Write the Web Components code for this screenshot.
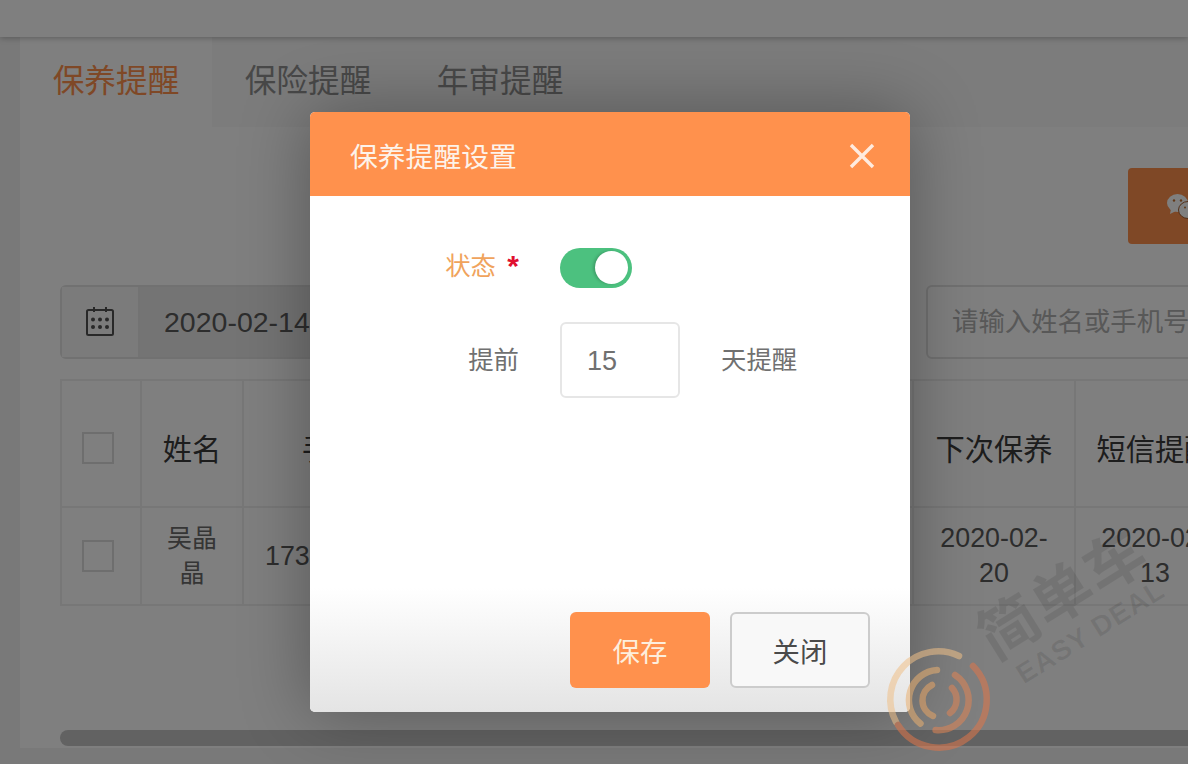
<!DOCTYPE html>
<html lang="zh">
<head>
<meta charset="utf-8">
<title>保养提醒</title>
<style>
  html, body { margin: 0; padding: 0; }
  body {
    width: 1188px;
    height: 764px;
    overflow: hidden;
    font-family: "Liberation Sans", "Noto Sans CJK SC", sans-serif;
  }
</style>
</head>
<body>
<reminder-page></reminder-page>

<script>
const tabsTemplate = document.createElement("template");
tabsTemplate.innerHTML = `
  <style>
    :host{
      display: flex;
      height: 90px;
      background: #f8f8f8;
    }
    div{
      width: 192px;
      box-sizing: border-box;
      padding-top: 22px;
      text-align: center;
      font-size: 31.7px;
      line-height: 44px;
      color: #909090;
    }
    .active{
      background: #fff;
      color: #ff914d;
    }
  </style>
  <div class="active">保养提醒</div>
  <div>保险提醒</div>
  <div>年审提醒</div>
`;

const filterTemplate = document.createElement("template");
filterTemplate.innerHTML = `
  <style>
    :host{
      display: flex;
      justify-content: space-between;
      height: 74px;
      margin-top: 41px;
    }
    .date, .search{
      display: flex;
      box-sizing: border-box;
      border: 2px solid #e2e2e2;
      border-radius: 6px;
      height: 74px;
    }
    .date{ width: 620px; }
    .addon{
      width: 76px;
      flex: none;
      display: flex;
      align-items: center;
      justify-content: center;
      border-right: 2px solid #e6e6e6;
      background: #f6f6f6;
    }
    .value{
      flex: 1;
      padding-left: 24px;
      font-size: 28.5px;
      line-height: 70px;
      color: #5a5a5a;
      background: #e9e9e9;
    }
    .search{
      width: 402px;
      padding-left: 24px;
      font-size: 26.4px;
      line-height: 70px;
      color: #b0b0b0;
      background: #fff;
    }
  </style>
  <div class="date">
    <div class="addon">
      <svg width="28" height="30" viewBox="0 0 28 30" fill="none" stroke="#505050" stroke-width="2">
        <rect x="1" y="3" width="26" height="25" rx="1.5"/>
        <path d="M8 0v5M20 0v5"/>
        <g fill="#505050" stroke="none">
          <circle cx="7" cy="12.5" r="2"/><circle cx="14" cy="12.5" r="2"/><circle cx="21" cy="12.5" r="2"/>
          <circle cx="7" cy="20" r="2"/><circle cx="14" cy="20" r="2"/><circle cx="21" cy="20" r="2"/>
        </g>
      </svg>
    </div>
    <div class="value">2020-02-14</div>
  </div>
  <div class="search">请输入姓名或手机号</div>
`;

const tableTemplate = document.createElement("template");
tableTemplate.innerHTML = `
  <style>
    :host{
      display: block;
      margin-top: 20px;
    }
    table{
      border-collapse: collapse;
      table-layout: fixed;
      width: 1268px;
      color: #5a5a5a;
    }
    th, td{
      border: 2px solid #eeeeee;
      padding: 0;
      text-align: center;
      overflow: hidden;
    }
    th{
      height: 119px;
      padding-top: 6px;
      font-size: 29.3px;
      font-weight: 400;
      color: #3a3a3a;
      white-space: nowrap;
    }
    td{
      height: 96px;
      font-size: 26.8px;
      line-height: 35px;
    }
    .name{ font-size: 25px; color: #6a6a6a; }
    .phone{ padding-left: 2px; }
    i{
      display: block;
      box-sizing: border-box;
      width: 32px;
      height: 32px;
      margin-left: 20px;
      border: 2px solid #dcdcdc;
      background: #fff;
    }
    th i{ margin-top: 2px; }
    .cut{ padding: 0 20px; }
  </style>
  <table>
    <colgroup>
      <col style="width:80px"><col style="width:102px"><col style="width:206px">
      <col style="width:464px"><col style="width:162px"><col style="width:160px"><col>
    </colgroup>
    <tr>
      <th><i></i></th>
      <th>姓名</th>
      <th>手机号</th>
      <th></th>
      <th>下次保养</th>
      <th>短信提醒</th>
      <th></th>
    </tr>
    <tr>
      <td><i></i></td>
      <td class="name cut">吴晶晶</td>
      <td class="phone">17301234567</td>
      <td></td>
      <td class="cut">2020-02-20</td>
      <td class="cut">2020-02-13</td>
      <td></td>
    </tr>
  </table>
`;

const modalTemplate = document.createElement("template");
modalTemplate.innerHTML = `
  <style>
    :host{
      display: flex;
      flex-direction: column;
      width: 600px;
      height: 600px;
      border-radius: 5px;
      overflow: hidden;
      background: #fff;
    }
    header{
      display: flex;
      align-items: center;
      justify-content: space-between;
      height: 84px;
      padding: 0 35px 0 40px;
      background: #ff914d;
      color: #fdf3ea;
      font-size: 27.8px;
    }
    header span{ margin-top: 1px; }
    header svg{ margin-top: 4px; }
    form{
      flex: 1;
      padding-top: 52px;
    }
    .row{
      display: flex;
      align-items: center;
      color: #707070;
      font-size: 25.4px;
    }
    .label{
      width: 209px;
      text-align: right;
      flex: none;
    }
    .status{
      height: 40px;
      margin-bottom: 34px;
    }
    .status .label{
      color: #f0a35c;
      margin-top: -8px;
    }
    .status b{
      display: inline-block;
      width: 12px;
      margin-left: 4px;
      color: #e0102f;
      font-size: 30px;
      line-height: 25px;
      font-weight: 700;
      vertical-align: -1px;
    }
    .toggle{
      position: relative;
      width: 72px;
      height: 40px;
      margin-left: 41px;
      border-radius: 20px;
      background: #4cc17f;
    }
    .toggle::after{
      content: "";
      position: absolute;
      top: 3px;
      right: 4px;
      width: 33px;
      height: 33px;
      border-radius: 50%;
      background: #fff;
      box-shadow: -2px 0 3px rgba(0,0,0,.18);
    }
    .input{
      box-sizing: border-box;
      width: 120px;
      height: 76px;
      margin: 0 41px;
      padding-left: 25px;
      border: 2px solid #e6e6e6;
      border-radius: 6px;
      font-size: 27px;
      line-height: 74px;
      color: #707070;
    }
    .raised{ margin-top: -4px; }
    footer{
      display: flex;
      justify-content: flex-end;
      gap: 20px;
      height: 76px;
      padding: 24px 40px;
      background: linear-gradient(#fff, #e4e4e4);
    }
    button{
      box-sizing: border-box;
      width: 140px;
      height: 76px;
      padding: 0;
      border-radius: 6px;
      font: inherit;
      font-size: 27.4px;
      border: 0;
    }
    .save{
      background: #ff914d;
      color: #fdeedd;
    }
    .close{
      background: #f8f8f8;
      border: 2px solid #ccc;
      color: #4a4a4a;
    }
  </style>
  <header>
    <span>保养提醒设置</span>
    <svg width="26" height="26" viewBox="0 0 26 26" stroke="#fff" stroke-width="3.4" opacity=".82"><path d="M2 2l22 22M24 2L2 24"/></svg>
  </header>
  <form>
    <div class="row status">
      <div class="label">状态 <b>*</b></div>
      <div class="toggle"></div>
    </div>
    <div class="row">
      <div class="label raised">提前</div>
      <div class="input">15</div>
      <div class="raised">天提醒</div>
    </div>
  </form>
  <footer>
    <button class="save" type="button">保存</button>
    <button class="close" type="button">关闭</button>
  </footer>
`;

const watermarkTemplate = document.createElement("template");
watermarkTemplate.innerHTML = `
  <style>
    :host{
      position: absolute;
      left: 880px;
      top: 540px;
      width: 308px;
      height: 224px;
      pointer-events: none;
    }
    svg{
      position: absolute;
      left: -1px;
      top: 100px;
    }
    .mark{
      position: absolute;
      left: 88px;
      top: 78px;
      transform: rotate(-32deg);
      transform-origin: left top;
      white-space: nowrap;
      color: rgba(0,0,0,.09);
      font-weight: 700;
    }
    .cn{ font-size: 60px; line-height: 62px; letter-spacing: 2px; }
    .en{ font-size: 28px; line-height: 30px; letter-spacing: 1px; margin-left: 12px; }
  </style>
  <div class="mark">
    <div class="cn">简单车</div>
    <div class="en">EASY DEAL</div>
  </div>
  <svg width="120" height="120" viewBox="0 0 120 120" fill="none" stroke-linecap="round" stroke-width="6.5" opacity=".55">
    <path d="M80 16A48 48 0 0 0 17 82" stroke="#f0c088"/>
    <path d="M58 30A30 30 0 0 0 41.5 83.6" stroke="#eab070"/>
    <path d="M53 45A17 17 0 0 0 54 76" stroke="#e8a565"/>
    <path d="M73 48A17 17 0 0 1 71 73" stroke="#e08555"/>
    <path d="M76 35A30 30 0 0 1 56.6 90" stroke="#e08555"/>
    <path d="M94 26A48 48 0 1 1 19 85" stroke="#e0764a"/>
  </svg>
`;

const pageTemplate = document.createElement("template");
pageTemplate.innerHTML = `
  <style>
    :host{
      display: block;
      position: relative;
      width: 1188px;
      height: 764px;
      overflow: hidden;
      background: #f2f2f2;
    }
    .top{
      height: 37px;
      background: #fff;
      box-shadow: 0 1px 6px rgba(0,0,0,.28);
      position: relative;
    }
    .panel{
      margin-left: 20px;
      height: 711px;
      background: #fff;
      overflow: hidden;
    }
    .inner{
      width: 1268px;
      padding-left: 40px;
    }
    .actions{
      display: flex;
      justify-content: flex-end;
      padding-top: 41px;
    }
    .wechat{
      display: flex;
      align-items: center;
      box-sizing: border-box;
      width: 200px;
      height: 76px;
      padding: 2px 0 0 39px;
      border-radius: 4px;
      background: #ff914d;
    }
    .scroll{
      height: 16px;
      margin-top: 124px;
      border-radius: 8px 0 0 8px;
      background: #c4c4c4;
    }
    .overlay{
      position: absolute;
      inset: 0;
      box-sizing: border-box;
      padding: 112px 0 0 310px;
      background: rgba(0,0,0,.5);
    }
    .overlay modal-dialog{
      box-shadow: 0 0 70px rgba(0,0,0,.32);
    }
  </style>
  <div class="top"></div>
  <div class="panel">
    <reminder-tabs></reminder-tabs>
    <div class="inner">
      <div class="actions">
        <div class="wechat">
          <svg width="40" height="26" viewBox="0 0 40 26">
            <ellipse cx="10.5" cy="9" rx="10.5" ry="9" fill="#fff"/>
            <path d="M4 15l-1 5 6-3z" fill="#fff"/>
            <ellipse cx="21" cy="16" rx="9.5" ry="8.5" fill="#fff" stroke="#a65e30" stroke-width="1"/>
            <circle cx="7" cy="6.5" r="1.2" fill="#c2702f"/><circle cx="14" cy="6.5" r="1.2" fill="#c2702f"/>
            <circle cx="18" cy="13.5" r="1" fill="#c2702f"/><circle cx="24" cy="13.5" r="1" fill="#c2702f"/>
          </svg>
        </div>
      </div>
      <reminder-filter></reminder-filter>
      <reminder-table></reminder-table>
      <div class="scroll"></div>
    </div>
  </div>
  <div class="overlay"><modal-dialog></modal-dialog></div>
  <brand-watermark></brand-watermark>
`;

function define(name, template) {
  window.customElements.define(
    name,
    class extends HTMLElement {
      constructor() {
        super()
          .attachShadow({ mode: "open" })
          .appendChild(template.content.cloneNode(true));
      }
    }
  );
}

define("reminder-tabs", tabsTemplate);
define("reminder-filter", filterTemplate);
define("reminder-table", tableTemplate);
define("modal-dialog", modalTemplate);
define("brand-watermark", watermarkTemplate);
define("reminder-page", pageTemplate);
</script>
</body>
</html>
